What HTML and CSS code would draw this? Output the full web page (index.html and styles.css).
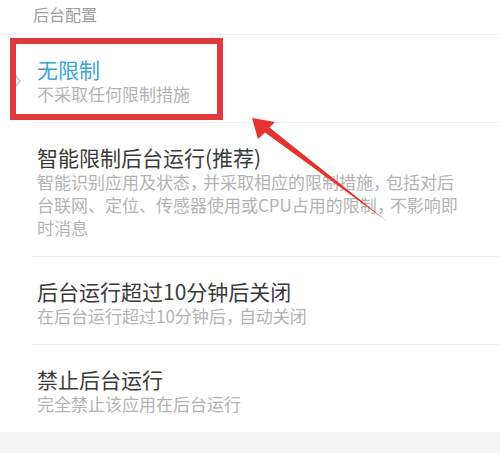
FILE: index.html
```html
<!DOCTYPE html>
<html lang="zh-CN">
<head>
<meta charset="utf-8">
<link rel="stylesheet" href="styles.css">
</head>
<body>
<div class="page">
  <div class="header">后台配置</div>
  <div class="list">
    <div class="item selected">
      <svg class="chevron" width="8" height="14" viewBox="0 0 8 14"><polyline points="1.5,1.5 6,7 1.5,12.5" fill="none" stroke="#c4c4c4" stroke-width="1.7"/></svg>
      <div class="title">无限制</div>
      <div class="desc">不采取任何限制措施</div>
    </div>
    <div class="item">
      <div class="title">智能限制后台运行(推荐)</div>
      <div class="desc">智能识别应用及状态<span class="p">，</span>并采取相应的限制措施<span class="p">，</span>包括对后<br>台联网、定位、传感器使用或CPU占用的限制<span class="p">，</span>不影响即<br>时消息</div>
    </div>
    <div class="item">
      <div class="title">后台运行超过10分钟后关闭</div>
      <div class="desc">在后台运行超过10分钟后<span class="p">，</span>自动关闭</div>
    </div>
    <div class="item last">
      <div class="title">禁止后台运行</div>
      <div class="desc">完全禁止该应用在后台运行</div>
    </div>
  </div>
  <div class="footer"></div>
  <div class="highlight"></div>
  <svg class="arrow" width="500" height="453" viewBox="0 0 500 453">
    <polygon points="252,118 275,122 269.5,127.5 388,222 265,132.5 258,139" fill="#e5322f"/>
  </svg>
</div>
</body>
</html>
```
FILE: styles.css
```css
* { box-sizing: border-box; }
html, body {
  margin: 0;
  padding: 0;
  background: #ffffff;
}
.page {
  position: relative;
  width: 500px;
  height: 453px;
  overflow: hidden;
  font-family: "Noto Sans CJK SC", "Noto Sans", sans-serif;
  background: #ffffff;
}
.header {
  height: 35px;
  padding-left: 33px;
  font-size: 16px;
  line-height: 28px;
  color: #9c9c9c;
  border-bottom: 1px solid #eeeeee;
}
.list {
  display: flex;
  flex-direction: column;
}
.item {
  position: relative;
  margin-left: 33px;
  padding: 21px 0 17px 4px;
  border-bottom: 1px solid #eeeeee;
}
.item.last {
  border-bottom: none;
}
.title {
  font-size: 21px;
  line-height: 26px;
  color: #3a3a3a;
}
.selected .title {
  color: #3aa5d5;
}
.desc {
  font-size: 17px;
  line-height: 23px;
  color: #b3b3b3;
}
.desc .p {
  letter-spacing: -4px;
}
.chevron {
  position: absolute;
  left: -19px;
  top: 39px;
}
.footer {
  height: 21px;
  background: #f4f4f4;
  position: absolute;
  left: 0;
  right: 0;
  bottom: 0;
}
.highlight {
  position: absolute;
  left: 10px;
  top: 38px;
  width: 213px;
  height: 82px;
  border: 6px solid #e03a3c;
}
.arrow {
  position: absolute;
  left: 0;
  top: 0;
}
```
